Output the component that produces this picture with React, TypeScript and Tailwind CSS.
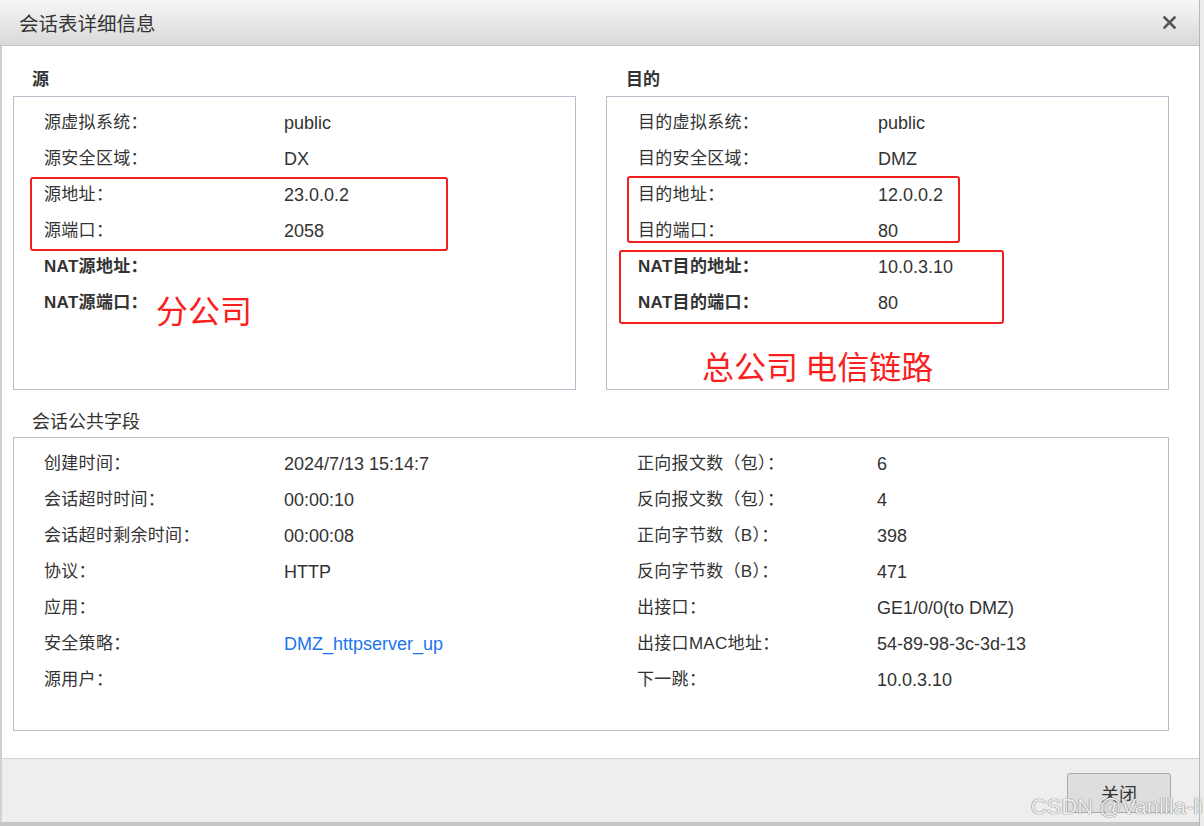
import React from "react";

const cjk = "font-['Noto_Sans_CJK_SC',sans-serif]";
const num = "font-['Liberation_Sans','Noto_Sans_CJK_SC',sans-serif]";

type Row = { label: string; value?: string; bold?: boolean; link?: boolean };

const srcRows: Row[] = [
  { label: "源虚拟系统：", value: "public" },
  { label: "源安全区域：", value: "DX" },
  { label: "源地址：", value: "23.0.0.2" },
  { label: "源端口：", value: "2058" },
  { label: "NAT源地址：", bold: true },
  { label: "NAT源端口：", bold: true },
];

const dstRows: Row[] = [
  { label: "目的虚拟系统：", value: "public" },
  { label: "目的安全区域：", value: "DMZ" },
  { label: "目的地址：", value: "12.0.0.2" },
  { label: "目的端口：", value: "80" },
  { label: "NAT目的地址：", value: "10.0.3.10", bold: true },
  { label: "NAT目的端口：", value: "80", bold: true },
];

const commonLeft: Row[] = [
  { label: "创建时间：", value: "2024/7/13 15:14:7" },
  { label: "会话超时时间：", value: "00:00:10" },
  { label: "会话超时剩余时间：", value: "00:00:08" },
  { label: "协议：", value: "HTTP" },
  { label: "应用：" },
  { label: "安全策略：", value: "DMZ_httpserver_up", link: true },
  { label: "源用户：" },
];

const commonRight: Row[] = [
  { label: "正向报文数（包）：", value: "6" },
  { label: "反向报文数（包）：", value: "4" },
  { label: "正向字节数（B）：", value: "398" },
  { label: "反向字节数（B）：", value: "471" },
  { label: "出接口：", value: "GE1/0/0(to DMZ)" },
  { label: "出接口MAC地址：", value: "54-89-98-3c-3d-13" },
  { label: "下一跳：", value: "10.0.3.10" },
];

const InfoRow = ({ row }: { row: Row }) => (
  <div className="flex items-center h-[36px]">
    <div
      className={`w-[240px] shrink-0 text-[17px] tracking-[0.3px] text-[#333] ${num} ${
        row.bold ? "font-bold" : ""
      }`}
    >
      {row.label}
    </div>
    <div
      className={`text-[18px] ${num} ${
        row.link ? "text-[#1b74f0]" : "text-[#333]"
      }`}
    >
      {row.value}
    </div>
  </div>
);

const App: React.FC = () => {
  return (
    <div className="w-[1204px] h-[826px] flex bg-[#ececec] overflow-hidden">
      <div className="w-[1200px] flex flex-col border-r border-[#b8b8b8]">
        {/* title bar */}
        <div className="h-[46px] shrink-0 flex items-center justify-between pl-[19px] pr-[23px] bg-gradient-to-b from-[#f6f6f6] to-[#d9d9d9] border-b border-[#c4c4c4]">
          <span className={`text-[19.5px] text-[#333] ${cjk}`}>会话表详细信息</span>
          <svg width="13" height="13" viewBox="0 0 13 13">
            <path
              d="M1.5 1.5 L11.5 11.5 M11.5 1.5 L1.5 11.5"
              stroke="#555"
              strokeWidth="2.6"
              strokeLinecap="square"
            />
          </svg>
        </div>

        {/* body */}
        <div className="flex-1 bg-white border-l-2 border-[#cfcfcf] pl-[11px] pr-[30px] pt-[20px]">
          <div className="grid grid-cols-2 gap-[30px]">
            {/* source */}
            <div>
              <div className={`h-[24px] leading-[24px] pl-[19px] mb-[6px] text-[17px] font-bold text-[#333] ${cjk}`}>
                源
              </div>
              <div className="relative h-[294px] border border-[#bcbccc] pt-[8px] pl-[30px]">
                {srcRows.map((r, i) => (
                  <InfoRow key={i} row={r} />
                ))}
                <div className="absolute left-[16px] top-[80px] w-[418px] h-[74px] border-2 border-[#f02020] rounded-[3px]" />
                <div className={`absolute left-[142px] top-[194px] text-[32px] leading-[36px] text-[#fa1e1e] ${cjk}`}>
                  分公司
                </div>
              </div>
            </div>

            {/* destination */}
            <div>
              <div className={`h-[24px] leading-[24px] pl-[20px] mb-[6px] text-[17px] font-bold text-[#333] ${cjk}`}>
                目的
              </div>
              <div className="relative h-[294px] border border-[#bcbccc] pt-[8px] pl-[31px]">
                {dstRows.map((r, i) => (
                  <InfoRow key={i} row={r} />
                ))}
                <div className="absolute left-[20px] top-[79px] w-[333px] h-[67px] border-2 border-[#f02020] rounded-[3px]" />
                <div className="absolute left-[12px] top-[153px] w-[385px] h-[74px] border-2 border-[#f02020] rounded-[3px]" />
                <div className={`absolute left-[95px] top-[250px] text-[32px] leading-[36px] text-[#fa1e1e] whitespace-nowrap ${cjk}`}>
                  总公司 电信链路
                </div>
              </div>
            </div>
          </div>

          {/* common */}
          <div className={`mt-[18px] h-[24px] leading-[24px] pl-[19px] mb-[5px] text-[18px] text-[#333] ${cjk}`}>
            会话公共字段
          </div>
          <div className="h-[294px] border border-[#bcbccc] pt-[8px] pl-[30px] grid grid-cols-[593px_1fr]">
            <div>
              {commonLeft.map((r, i) => (
                <InfoRow key={i} row={r} />
              ))}
            </div>
            <div>
              {commonRight.map((r, i) => (
                <InfoRow key={i} row={r} />
              ))}
            </div>
          </div>
        </div>

        {/* footer */}
        <div className="relative h-[64px] shrink-0 bg-[#eeeeee] border-t border-l-2 border-[#d2d2d2] flex justify-end items-start pt-[14px] pr-[28px]">
          <button className={`w-[104px] h-[40px] bg-[#dedede] border border-[#a9a9a9] rounded-[3px] text-[18px] text-[#333] ${cjk}`}>
            关闭
          </button>
          <div className={`absolute right-[-4px] bottom-[-1px] text-[22px] text-[#eeeeee] whitespace-nowrap [text-shadow:0_0_1px_#777,0_0_1px_#777] ${num}`}>
            CSDN @Vanilla-li
          </div>
        </div>
        <div className="h-[4px] shrink-0 bg-[#c6c6c6]" />
      </div>
    </div>
  );
};

export default App;
